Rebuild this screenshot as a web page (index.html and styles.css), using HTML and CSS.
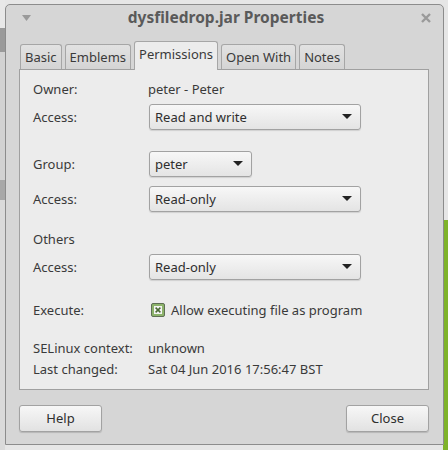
FILE: index.html
```html
<!DOCTYPE html>
<html lang="en">
<head>
    <meta charset="UTF-8">
    <title>dysfiledrop.jar Properties</title>
    <link rel="stylesheet" href="styles.css">
</head>
<body>
    <div class="window">
        <div class="titlebar">
            <svg class="wm-menu" width="9" height="6" viewBox="0 0 9 6"><path d="M0 0h9L4.5 6z" fill="#9a9a9a"/></svg>
            <span class="title">dysfiledrop.jar Properties</span>
            <svg class="wm-close" width="10" height="10" viewBox="0 0 10 10"><path d="M1 1l8 8M9 1l-8 8" stroke="#9a9a9a" stroke-width="2.4"/></svg>
        </div>

        <div class="content">
            <div class="tabs">
                <div class="tab">Basic</div>
                <div class="tab">Emblems</div>
                <div class="tab active">Permissions</div>
                <div class="tab">Open With</div>
                <div class="tab">Notes</div>
            </div>

            <div class="panel">
                <div class="row owner">
                    <span class="label">Owner:</span>
                    <span class="value">peter - Peter</span>
                </div>
                <div class="row access-1">
                    <span class="label">Access:</span>
                    <div class="combo wide">Read and write<span class="arrow"></span></div>
                </div>
                <div class="row group">
                    <span class="label">Group:</span>
                    <div class="combo narrow">peter<span class="arrow"></span></div>
                </div>
                <div class="row access-2">
                    <span class="label">Access:</span>
                    <div class="combo wide">Read-only<span class="arrow"></span></div>
                </div>
                <div class="row others">
                    <span class="label">Others</span>
                </div>
                <div class="row access-3">
                    <span class="label">Access:</span>
                    <div class="combo wide">Read-only<span class="arrow"></span></div>
                </div>
                <div class="row execute">
                    <span class="label">Execute:</span>
                    <label class="check">
                        <svg width="14" height="14" viewBox="0 0 14 14">
                            <rect x="0.5" y="0.5" width="13" height="13" rx="1.5" fill="#8db36b" stroke="#5f6f55"/>
                            <rect x="3" y="3" width="8" height="8" fill="#f4f4f4"/>
                            <path d="M4.6 4.6l4.8 4.8M9.4 4.6l-4.8 4.8" stroke="#4a6a33" stroke-width="1.5"/>
                        </svg>
                        Allow executing file as program
                    </label>
                </div>
                <div class="row selinux">
                    <span class="label">SELinux context:</span>
                    <span class="value">unknown</span>
                </div>
                <div class="row changed">
                    <span class="label">Last changed:</span>
                    <span class="value">Sat 04 Jun 2016 17:56:47 BST</span>
                </div>
            </div>

            <div class="buttons">
                <button type="button">Help</button>
                <button type="button">Close</button>
            </div>
        </div>
    </div>
</body>
</html>
```

FILE: styles.css
```css
html, body {
    margin: 0;
    padding: 0;
}

body {
    width: 448px;
    height: 450px;
    overflow: hidden;
    font-family: "Noto Sans", "DejaVu Sans", sans-serif;
    font-size: 13px;
    color: #3a3a3a;
    background:
        linear-gradient(to bottom, transparent 220px, #7fb32a 220px) right top / 5px 100% no-repeat,
        linear-gradient(to bottom, #e8e8e8 0, #e8e8e8 28px, #9a9a9a 28px, #9a9a9a 52px, #d2d2d2 52px, #d2d2d2 180px, #a8a8a8 180px, #a8a8a8 200px, #dadada 200px) left top / 5px 100% no-repeat,
        #e6e6e6;
}

.window {
    box-sizing: border-box;
    width: 439px;
    height: 441px;
    margin: 4px 0 0 5px;
    background-color: #d6d6d6;
    border: 1px solid #8c8c8c;
    border-radius: 5px 5px 0 0;
    display: flex;
    flex-direction: column;
}

.titlebar {
    height: 29px;
    display: flex;
    align-items: center;
    padding: 0 12px 0 16px;
}

.title {
    flex: 1;
    text-align: center;
    font-weight: bold;
    font-size: 15.5px;
    color: #5a5a5a;
    margin-top: -5px;
}

.wm-menu {
    margin-top: -4px;
}

.wm-close {
    margin-top: -4px;
}

.content {
    padding: 7px 14px 0 13px;
}

.tabs {
    display: flex;
    align-items: flex-end;
    gap: 3px;
    height: 28px;
    padding-left: 1px;
    position: relative;
    z-index: 1;
}

.tab {
    box-sizing: border-box;
    height: 25px;
    padding: 3px 4px 0;
    border: 1px solid #a6a6a6;
    border-bottom: none;
    border-radius: 3px 3px 0 0;
    background: linear-gradient(#e2e2e2, #d4d4d4);
    color: #3a3a3a;
}

.tab.active {
    height: 29px;
    margin-bottom: -1px;
    padding-top: 3px;
    background: #ececec;
}

.panel {
    box-sizing: border-box;
    height: 321px;
    background-color: #ececec;
    border: 1px solid #a0a0a0;
    padding: 9px 13px 0;
}

.row {
    display: flex;
    align-items: center;
    height: 20px;
}

.label {
    width: 115px;
    flex-shrink: 0;
}

.combo {
    box-sizing: border-box;
    height: 26px;
    display: flex;
    align-items: center;
    justify-content: space-between;
    padding: 0 8px 1px 5px;
    margin-left: 1px;
    border: 1px solid #a2a2a2;
    border-radius: 3px;
    background: linear-gradient(#f7f7f7, #e4e4e4);
    box-shadow: 0 1px 1px rgba(0, 0, 0, 0.12);
    color: #2e2e2e;
}

.combo.wide {
    width: 212px;
}

.combo.narrow {
    width: 103px;
}

.arrow {
    width: 0;
    height: 0;
    border-left: 5px solid transparent;
    border-right: 5px solid transparent;
    border-top: 5px solid #222;
}

.row.access-1, .row.access-2, .row.access-3, .row.group {
    height: 26px;
}

.access-1 { margin-top: 5px; }
.group { margin-top: 21px; }
.access-2 { margin-top: 9px; }
.others { margin-top: 17px; }
.access-3 { margin-top: 5px; }
.execute { margin-top: 20px; }
.selinux { margin-top: 18px; }
.changed { margin-top: 1px; }

.check {
    display: flex;
    align-items: center;
    gap: 6px;
    margin-left: 3px;
}

.buttons {
    display: flex;
    justify-content: space-between;
    margin-top: 15px;
}

button {
    box-sizing: border-box;
    width: 83px;
    height: 27px;
    font-family: inherit;
    font-size: 13px;
    color: #2e2e2e;
    border: 1px solid #a2a2a2;
    border-radius: 3px;
    background: linear-gradient(#f7f7f7, #e2e2e2);
    box-shadow: 0 1px 1px rgba(0, 0, 0, 0.15);
    padding: 0 0 1px;
}
```
